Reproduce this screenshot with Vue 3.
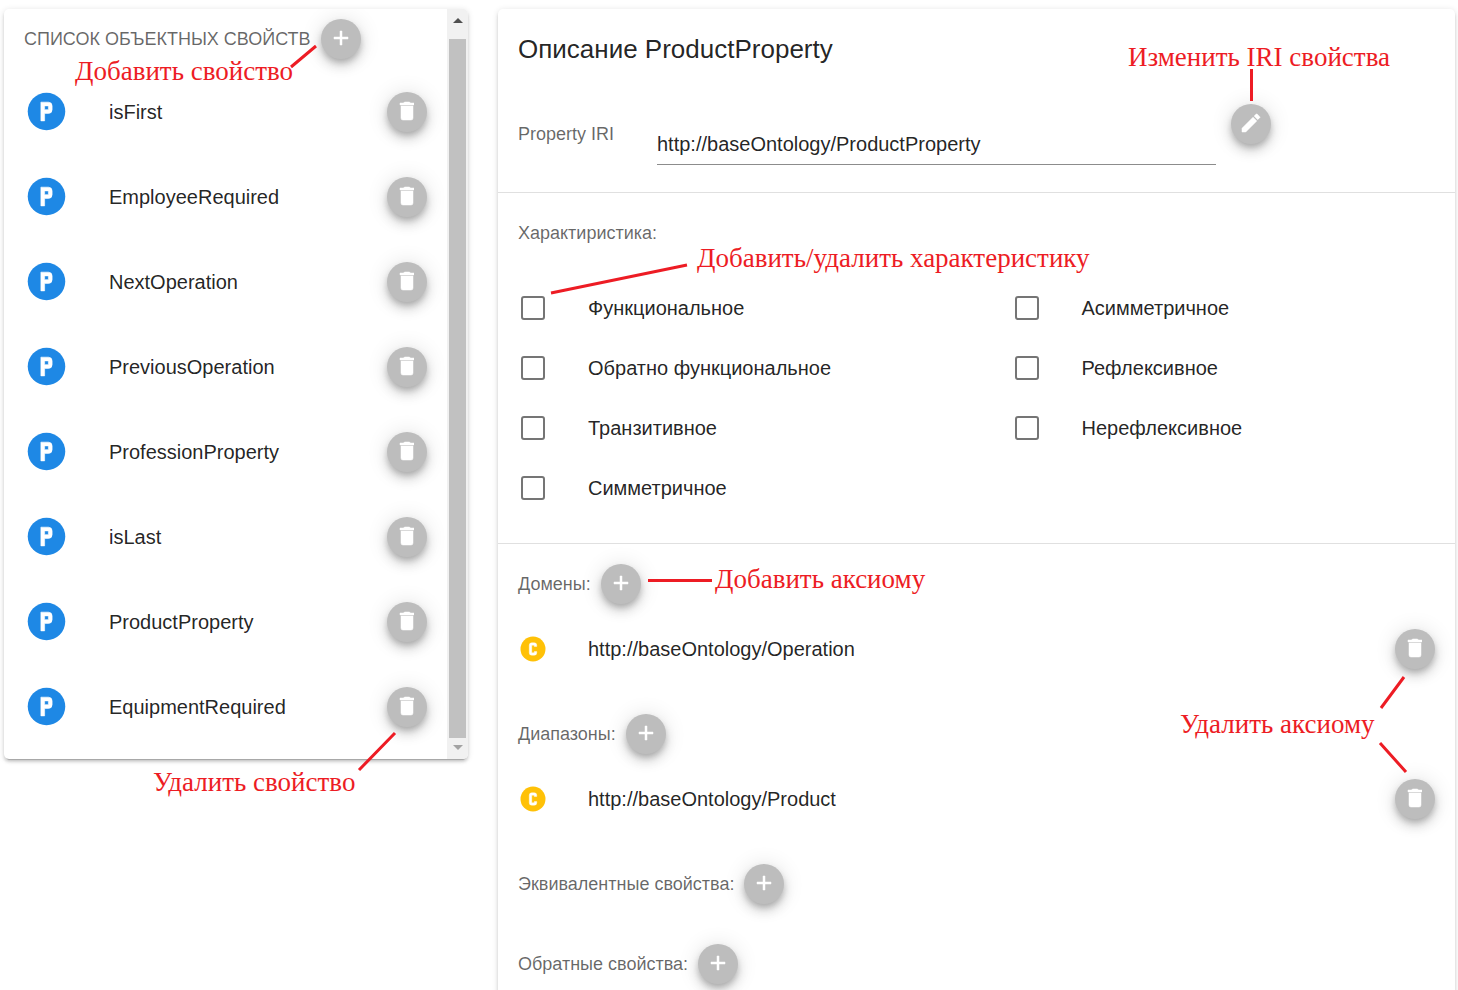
<script setup>
import { ref } from 'vue'

const properties = [
  'isFirst',
  'EmployeeRequired',
  'NextOperation',
  'PreviousOperation',
  'ProfessionProperty',
  'isLast',
  'ProductProperty',
  'EquipmentRequired',
]

const iri = ref('http://baseOntology/ProductProperty')

const traitColumns = ref([
  [
    { label: 'Функциональное', on: false },
    { label: 'Обратно функциональное', on: false },
    { label: 'Транзитивное', on: false },
    { label: 'Симметричное', on: false },
  ],
  [
    { label: 'Асимметричное', on: false },
    { label: 'Рефлексивное', on: false },
    { label: 'Нерефлексивное', on: false },
  ],
])

const axiomGroups = [
  { title: 'Домены:', items: ['http://baseOntology/Operation'] },
  { title: 'Диапазоны:', items: ['http://baseOntology/Product'] },
  { title: 'Эквивалентные свойства:', items: [] },
  { title: 'Обратные свойства:', items: [] },
]

const icons = {
  plus: 'M19,13H13V19H11V13H5V11H11V5H13V11H19V13Z',
  trash: 'M19,4H15.5L14.5,3H9.5L8.5,4H5V6H19M6,19A2,2 0 0,0 8,21H16A2,2 0 0,0 18,19V7H6V19Z',
  pencil:
    'M20.71,7.04C21.1,6.65 21.1,6 20.71,5.63L18.37,3.29C18,2.9 17.35,2.9 16.96,3.29L15.12,5.12L18.87,8.87M3,17.25V21H6.75L17.81,9.93L14.06,6.18L3,17.25Z',
  property: 'M9,7V17H11V13H13A2,2 0 0,0 15,11V9A2,2 0 0,0 13,7H9M11,9H13V11H11V9Z',
  class:
    'M11,7A2,2 0 0,0 9,9V15A2,2 0 0,0 11,17H13A2,2 0 0,0 15,15V14H13V15H11V9H13V10H15V9A2,2 0 0,0 13,7H11Z',
}
</script>

<template>
  <div class="page">
    <section class="card list-card">
      <div class="list-body">
        <header class="list-head">
          <h2 class="caption">СПИСОК ОБЪЕКТНЫХ СВОЙСТВ</h2>
          <button type="button" class="fab" aria-label="Добавить">
            <svg viewBox="0 0 24 24"><path :d="icons.plus" /></svg>
          </button>
        </header>
        <ul class="list">
          <li v-for="name in properties" :key="name" class="list-row">
            <svg class="badge badge-p" viewBox="0 0 24 24">
              <circle cx="12" cy="12" r="10" />
              <path :d="icons.property" />
            </svg>
            <span class="list-name">{{ name }}</span>
            <button type="button" class="fab" :aria-label="'Удалить ' + name">
              <svg viewBox="0 0 24 24"><path :d="icons.trash" /></svg>
            </button>
          </li>
        </ul>
      </div>
      <div class="scroll" aria-hidden="true">
        <svg class="scroll-up" viewBox="0 0 10 5"><path d="M0 5L5 0L10 5Z" /></svg>
        <div class="scroll-thumb"></div>
        <svg class="scroll-down" viewBox="0 0 10 5"><path d="M0 0L5 5L10 0Z" /></svg>
      </div>
    </section>

    <main class="card detail-card">
      <h1 class="title">Описание ProductProperty</h1>

      <div class="iri">
        <label class="caption iri-label" for="iri">Property IRI</label>
        <input id="iri" v-model="iri" class="iri-input" type="text" spellcheck="false" />
        <button type="button" class="fab" aria-label="Изменить IRI">
          <svg viewBox="0 0 24 24"><path :d="icons.pencil" /></svg>
        </button>
      </div>

      <section class="traits">
        <h2 class="caption group-head">Характиристика:</h2>
        <div class="trait-grid">
          <div v-for="(column, c) in traitColumns" :key="c" class="trait-column">
            <label v-for="trait in column" :key="trait.label" class="trait">
              <input v-model="trait.on" type="checkbox" class="box" />
              <span>{{ trait.label }}</span>
            </label>
          </div>
        </div>
      </section>

      <section v-for="group in axiomGroups" :key="group.title">
        <div class="group-head">
          <h2 class="caption">{{ group.title }}</h2>
          <button type="button" class="fab" :aria-label="'Добавить: ' + group.title">
            <svg viewBox="0 0 24 24"><path :d="icons.plus" /></svg>
          </button>
        </div>
        <div v-for="item in group.items" :key="item" class="axiom">
          <svg class="badge badge-c" viewBox="0 0 24 24">
            <circle cx="12" cy="12" r="10" />
            <path :d="icons.class" />
          </svg>
          <span class="axiom-name">{{ item }}</span>
          <button type="button" class="fab" :aria-label="'Удалить ' + item">
            <svg viewBox="0 0 24 24"><path :d="icons.trash" /></svg>
          </button>
        </div>
      </section>
    </main>

    <div class="notes">
      <svg class="note-lines" width="1458" height="990" viewBox="0 0 1458 990">
        <path d="M291 67L316 46M1251.5 69V101M551 293L687 265M648 580.5H712M1381 708L1404 677M1380 743L1406 772M359 770L395 733" />
      </svg>
      <span class="note note-add-property">Добавить свойство</span>
      <span class="note note-edit-iri">Изменить IRI свойства</span>
      <span class="note note-trait">Добавить/удалить характеристику</span>
      <span class="note note-add-axiom">Добавить аксиому</span>
      <span class="note note-delete-axiom">Удалить аксиому</span>
      <span class="note note-delete-property">Удалить свойство</span>
    </div>
  </div>
</template>

<style>
html {
  scrollbar-width: none;
  background: #fff;
}
</style>

<style scoped>
.page {
  position: relative;
  display: flex;
  align-items: flex-start;
  gap: 30px;
  padding: 9px 3px 0 4px;
  font-family: 'Liberation Sans', Arial, sans-serif;
  font-size: 20px;
  line-height: 30px;
  color: rgba(0, 0, 0, 0.87);
}
.card {
  background: #fff;
  border-radius: 5px;
  box-shadow: 0 4px 1px -3px rgba(0, 0, 0, 0.2), 0 3px 3px rgba(0, 0, 0, 0.14),
    0 1px 6px rgba(0, 0, 0, 0.12);
}
.list-card {
  display: flex;
  flex: 464 1 0;
  overflow: hidden;
}
.detail-card {
  flex: 957 1 0;
}
.list-body {
  flex: 1;
  padding: 0 20px 10px;
}
.list-head {
  display: flex;
  align-items: center;
  gap: 10px;
  height: 60px;
}
.caption {
  margin: 0;
  font-size: 18px;
  font-weight: 400;
  color: rgba(0, 0, 0, 0.6);
}
.list {
  margin: 0;
  padding: 0;
  list-style: none;
}
.list-row {
  display: flex;
  align-items: center;
  height: 85px;
}
.badge {
  flex: none;
}
.badge path {
  fill: #fff;
  stroke: #fff;
  stroke-width: 0.3;
}
.badge-p {
  width: 45px;
  height: 45px;
  fill: #1e88e5;
}
.list-name {
  flex: 1;
  margin-left: 40px;
}
.fab {
  display: flex;
  flex: none;
  align-items: center;
  justify-content: center;
  width: 40px;
  height: 40px;
  padding: 0 0 2px;
  border: 0;
  border-radius: 50%;
  background: #bdbdbd;
  box-shadow: 0 4px 6px -1px rgba(0, 0, 0, 0.2), 0 7px 12px rgba(0, 0, 0, 0.14),
    0 1px 22px rgba(0, 0, 0, 0.12);
  cursor: pointer;
}
.fab svg {
  width: 24px;
  height: 24px;
  fill: #fff;
  stroke: #fff;
  stroke-width: 0.5;
}
.scroll {
  display: flex;
  flex-direction: column;
  align-items: center;
  width: 21px;
  background: #f1f1f1;
}
.scroll svg {
  width: 10px;
  height: 5px;
}
.scroll-up {
  margin: 9px 0 16px;
  fill: #505050;
}
.scroll-thumb {
  flex: 1;
  width: 17px;
  background: #c1c1c1;
}
.scroll-down {
  margin: 7px 0 9px;
  fill: #a3a3a3;
}
.title {
  margin: 0;
  padding: 25px 20px;
  font-size: 26px;
  font-weight: 400;
}
.iri {
  display: grid;
  grid-template-columns: 139fr 559fr 219fr;
  align-items: start;
  padding: 15px 20px 27px;
  border-bottom: 1px solid #e0e0e0;
}
.iri-label {
  margin-top: 15px;
}
.iri-input {
  box-sizing: border-box;
  width: 100%;
  height: 41px;
  margin-top: 20px;
  padding: 0;
  border: 0;
  border-bottom: 1px solid #8c8c8c;
  background: none;
  font: inherit;
  color: inherit;
  outline: none;
}
.iri .fab {
  margin-left: 15px;
}
.traits {
  padding-bottom: 25px;
  border-bottom: 1px solid #e0e0e0;
}
.group-head {
  display: flex;
  align-items: center;
  gap: 10px;
  height: 80px;
  padding: 0 20px;
}
.trait-grid {
  display: grid;
  grid-template-columns: 1fr 1fr;
  gap: 30px;
  padding-top: 5px;
}
.trait-column {
  padding-left: 23px;
}
.trait {
  display: flex;
  align-items: center;
  gap: 43px;
  height: 60px;
}
.box {
  appearance: none;
  width: 24px;
  height: 24px;
  margin: 0;
  border: 2px solid #757575;
  border-radius: 3px;
}
.box:checked {
  background: #757575;
}
.axiom {
  display: flex;
  align-items: center;
  height: 50px;
  margin-bottom: 20px;
  padding: 0 20px;
}
.badge-c {
  width: 30px;
  height: 30px;
  fill: #ffc107;
}
.axiom-name {
  flex: 1;
  margin-left: 40px;
}
.notes {
  position: absolute;
  top: 0;
  left: 0;
  pointer-events: none;
}
.note-lines {
  display: block;
  fill: none;
  stroke: #ed1c24;
  stroke-width: 3;
  stroke-linecap: butt;
}
.note {
  position: absolute;
  font-family: 'Liberation Serif', 'Times New Roman', serif;
  font-size: 27px;
  white-space: nowrap;
  color: #ed1c24;
}
.note-add-property {
  top: 56px;
  left: 75px;
}
.note-edit-iri {
  top: 42px;
  left: 1128px;
}
.note-trait {
  top: 243px;
  left: 697px;
}
.note-add-axiom {
  top: 564px;
  left: 715px;
}
.note-delete-axiom {
  top: 709px;
  left: 1180px;
}
.note-delete-property {
  top: 767px;
  left: 153px;
}
</style>
